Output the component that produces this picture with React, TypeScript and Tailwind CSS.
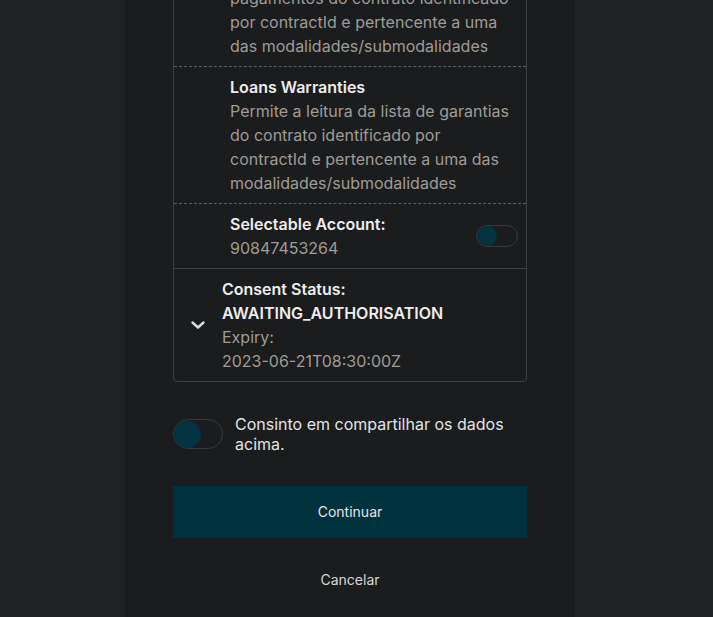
// Consent review screen, scrolled to bottom

const font = { fontFamily: "Inter, 'Noto Sans', sans-serif" };

function Toggle({ size = "sm" }: { size?: "sm" | "lg" }) {
  if (size === "lg") {
    return (
      <div className="flex h-[30px] w-[50px] shrink-0 items-center rounded-full border border-[#36383b] bg-[#1b1c1e]">
        <div className="h-[27px] w-[27px] rounded-full bg-[#013440]"></div>
      </div>
    );
  }
  return (
    <div className="flex h-[22px] w-[42px] shrink-0 items-center rounded-full border border-[#36383b] bg-[#1b1c1e]">
      <div className="h-[20px] w-[20px] rounded-full bg-[#013440]"></div>
    </div>
  );
}

function Permission({ title, desc }: { title: string; desc: string }) {
  return (
    <div className="border-b border-dashed border-[#5a5c60] py-2 pl-14 pr-2">
      <div className="font-semibold text-[#ededed]">{title}</div>
      <div className="text-[#a09b95]">{desc}</div>
    </div>
  );
}

export default function App() {
  return (
    <div className="h-[617px] w-full overflow-hidden bg-[#202124]" style={font}>
      <div className="ml-[125px] flex h-[617px] w-[450px] flex-col justify-end overflow-hidden bg-[#1b1c1e] px-12 pb-[11px]">
        {/* Permissions card */}
        <div className="shrink-0 rounded border border-[#3d3f42] text-base leading-6">
          <Permission
            title="Loans Payments"
            desc="Permite a leitura dos dados de pagamentos do contrato identificado por contractId e pertencente a uma das modalidades/submodalidades"
          />
          <Permission
            title="Loans Warranties"
            desc="Permite a leitura da lista de garantias do contrato identificado por contractId e pertencente a uma das modalidades/submodalidades"
          />

          {/* Selectable account */}
          <div className="flex items-center justify-between border-b border-[#3d3f42] py-2 pl-14 pr-2">
            <div>
              <div className="font-semibold text-[#ededed]">Selectable Account:</div>
              <div className="text-[#a09b95]">90847453264</div>
            </div>
            <Toggle />
          </div>

          {/* Consent status */}
          <div className="flex items-center gap-4 px-4 py-2">
            <svg width="16" height="16" viewBox="0 0 16 16" fill="none" className="shrink-0">
              <path d="M2.5 5.5 8 10.5l5.5-5" stroke="#dcdcdc" strokeWidth="2.4" strokeLinecap="round" strokeLinejoin="round" />
            </svg>
            <div>
              <div className="font-semibold text-[#ededed]">Consent Status:</div>
              <div className="font-semibold text-[#ededed]">AWAITING_AUTHORISATION</div>
              <div className="text-[#a09b95]">Expiry:</div>
              <div className="text-[#a09b95]">2023-06-21T08:30:00Z</div>
            </div>
          </div>
        </div>

        {/* Agreement toggle */}
        <div className="mt-8 flex shrink-0 items-center gap-3">
          <Toggle size="lg" />
          <span className="text-base leading-5 text-[#e4e4e4]">Consinto em compartilhar os dados acima.</span>
        </div>

        {/* Actions */}
        <button className="mt-8 h-[52px] w-full shrink-0 bg-[#00323e] text-sm text-[#e6e6e6]">Continuar</button>
        <button className="mt-4 h-[52px] w-full shrink-0 text-sm text-[#d6d6d6]">Cancelar</button>
      </div>
    </div>
  );
}
